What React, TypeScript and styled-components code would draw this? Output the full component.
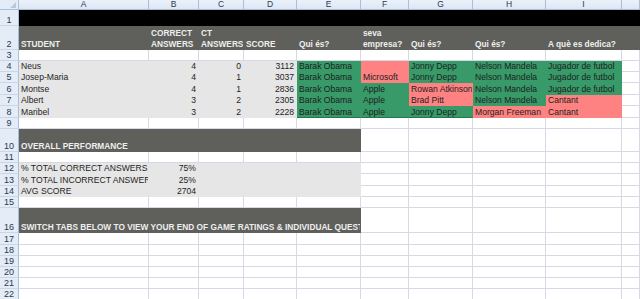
import React from "react";
import styled, {createGlobalStyle} from "styled-components";

const GRID = '#d6d8e6';
const HEAD_BG = '#e4ecf7';
const HEAD_LINE = '#a9bfd6';
const DARK = '#5f605b';
const LIGHT = '#e6e6e6';
const GREEN = '#379a68';
const RED = '#ff8282';

const colWidths = [19, 130, 50, 45, 53, 64, 48, 64, 73, 76, 18];
const rowHeights = [10, 16, 24, 11, 11, 11, 12, 11, 12, 11, 23, 11, 11, 12, 11, 11, 25, 12, 11, 11, 11, 11, 11];
const letters = ['A', 'B', 'C', 'D', 'E', 'F', 'G', 'H', 'I', ''];

const GlobalStyle = createGlobalStyle`
    body {
        margin: 0;
        background: #fff;
        overflow: hidden;
        font-family: "Liberation Sans", Arial, sans-serif;
    }
`

const Sheet = styled.div`
    display: grid;
    grid-template-columns: ${colWidths.map(w => `${w}px`).join(' ')};
    grid-template-rows: ${rowHeights.map(h => `${h}px`).join(' ')};
    width: 640px;
    height: 299px;
    overflow: hidden;
`

const Corner = styled.div`
    position: relative;
    background: ${HEAD_BG};
    border-right: 1px solid ${HEAD_LINE};
    border-bottom: 1px solid ${HEAD_LINE};
    box-sizing: border-box;

    &::after {
        content: "";
        position: absolute;
        right: 2px;
        bottom: 1px;
        border-left: 6px solid transparent;
        border-bottom: 6px solid #b9c9dc;
    }
`

const ColHead = styled.div`
    box-sizing: border-box;
    background: linear-gradient(#eaf1fa, #dde7f3);
    border-right: 1px solid ${HEAD_LINE};
    border-bottom: 1px solid ${HEAD_LINE};
    color: #2b3a4a;
    font-size: 8.5px;
    line-height: 9px;
    text-align: center;
    overflow: hidden;
`

const RowHead = styled.div`
    box-sizing: border-box;
    display: flex;
    align-items: flex-end;
    justify-content: center;
    background: ${HEAD_BG};
    border-right: 1px solid ${HEAD_LINE};
    border-bottom: 1px solid #c9d6e8;
    color: #2b3a4a;
    font-size: 9px;
    line-height: 10px;
    padding-bottom: 0;
`

type CellProps = {
    $span?: number;
    $bg?: string;
    $right?: boolean;
    $bold?: boolean;
    $ink?: string;
    $edge?: string;
};

const Cell = styled.div<CellProps>`
    box-sizing: border-box;
    grid-column: span ${p => p.$span || 1};
    display: flex;
    flex-direction: column;
    justify-content: flex-end;
    align-items: ${p => p.$right ? 'flex-end' : 'flex-start'};
    padding: 0 2px 0 2px;
    background: ${p => p.$bg || '#fff'};
    border-right: 1px solid ${p => p.$bg || GRID};
    border-bottom: 1px solid ${p => p.$edge || p.$bg || GRID};
    color: ${p => p.$ink || '#1e1e1e'};
    font-size: ${p => p.$bold ? '8.3px' : '8.6px'};
    font-weight: ${p => p.$bold ? 'bold' : 'normal'};
    line-height: 10.5px;
    white-space: nowrap;
    overflow: hidden;
`

type C = {t?: string[] | string; span?: number; bg?: string; right?: boolean; bold?: boolean; ink?: string; edge?: string};

const blank = (n: number): C[] => Array.from({length: n}, () => ({}));
const head = (t: string[] | string): C => ({t, bg: DARK, bold: true, ink: '#eeeeee'});
const fill = (t: string, ok: boolean, edge?: boolean): C => ({t, bg: ok ? GREEN : RED, edge: edge && ok ? '#23784c' : undefined});

const students = [
    {name: 'Neus', ok: 4, ko: 0, score: 3112, answers: [['Barak Obama', 1], ['', 0], ['Jonny Depp', 1], ['Nelson Mandela', 1], ['Jugador de futbol', 1]]},
    {name: 'Josep-Maria', ok: 4, ko: 1, score: 3037, answers: [['Barak Obama', 1], ['Microsoft', 0], ['Jonny Depp', 1], ['Nelson Mandela', 1], ['Jugador de futbol', 1]]},
    {name: 'Montse', ok: 4, ko: 1, score: 2836, answers: [['Barak Obama', 1], ['Apple', 1], ['Rowan Atkinson', 0], ['Nelson Mandela', 1], ['Jugador de futbol', 1]]},
    {name: 'Albert', ok: 3, ko: 2, score: 2305, answers: [['Barak Obama', 1], ['Apple', 1], ['Brad Pitt', 0], ['Nelson Mandela', 1], ['Cantant', 0]]},
    {name: 'Maribel', ok: 3, ko: 2, score: 2228, answers: [['Barak Obama', 1], ['Apple', 1], ['Jonny Depp', 1], ['Morgan Freeman', 0], ['Cantant', 0]]},
];

const rows: C[][] = [
    [{span: 10, bg: '#000'}],
    [head('STUDENT'), head(['CORRECT', 'ANSWERS']), head(['CT', 'ANSWERS']), head('SCORE'), head('Qui és?'),
        head(['seva', 'empresa?']), head('Qui és?'), head('Qui és?'), head('A què es dedica?'), head('')],
    blank(10),
    ...students.map((s, i) => [
        {t: s.name, bg: LIGHT},
        {t: String(s.ok), bg: LIGHT, right: true},
        {t: String(s.ko), bg: LIGHT, right: true},
        {t: String(s.score), bg: LIGHT, right: true},
        ...s.answers.map(([t, ok]) => fill(t as string, ok === 1, i === students.length - 1)),
        {},
    ]),
    blank(10),
    [{...head('OVERALL PERFORMANCE'), span: 5}, ...blank(5)],
    blank(10),
    [{t: '% TOTAL CORRECT ANSWERS', bg: LIGHT}, {t: '75%', bg: LIGHT, right: true}, {span: 3, bg: LIGHT}, ...blank(5)],
    [{t: '% TOTAL INCORRECT ANSWERS', bg: LIGHT}, {t: '25%', bg: LIGHT, right: true}, {span: 3, bg: LIGHT}, ...blank(5)],
    [{t: 'AVG SCORE', bg: LIGHT}, {t: '2704', bg: LIGHT, right: true}, {span: 3, bg: LIGHT}, ...blank(5)],
    blank(10),
    [{...head('SWITCH TABS BELOW TO VIEW YOUR END OF GAME RATINGS & INDIVIDUAL QUESTIONS'), span: 5}, ...blank(5)],
    ...Array.from({length: 6}, () => blank(10)),
];

export default function App() {
    return (
        <>
            <GlobalStyle/>
            <Sheet>
                <Corner/>
                {letters.map((l, i) => <ColHead key={i}>{l}</ColHead>)}
                {rows.map((cells, r) => (
                    <React.Fragment key={r}>
                        <RowHead>{r + 1}</RowHead>
                        {cells.map((c, i) => (
                            <Cell key={i} $span={c.span} $bg={c.bg} $right={c.right} $bold={c.bold} $ink={c.ink} $edge={c.edge}>
                                {(Array.isArray(c.t) ? c.t : [c.t || '']).map((line, k) => <span key={k}>{line}</span>)}
                            </Cell>
                        ))}
                    </React.Fragment>
                ))}
            </Sheet>
        </>
    )
}
